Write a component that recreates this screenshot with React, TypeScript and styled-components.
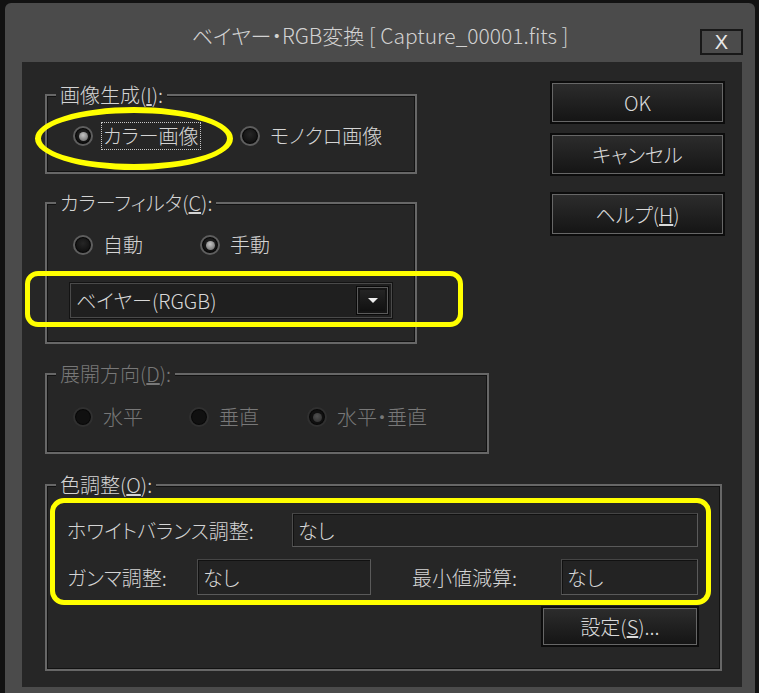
import React from "react";
import styled, { createGlobalStyle } from "styled-components";

const GlobalStyle = createGlobalStyle`
  html, body {
    margin: 0;
    padding: 0;
    background: #121212;
  }
  body {
    width: 759px;
    height: 693px;
    overflow: hidden;
    font-family: "Noto Sans CJK JP", "Noto Sans", sans-serif;
    font-weight: 300;
    font-feature-settings: "palt";
  }
`;

const Window = styled.div`
  margin: 3px 0 0 5px;
  width: 750px;
  height: 690px;
  background: #4b4b4b;
  border-radius: 6px 6px 0 0;
  display: flex;
  flex-direction: column;
`;

const TitleBar = styled.div`
  height: 59px;
  flex: none;
  display: grid;
  grid-template-columns: 1fr auto 1fr;
`;

const Title = styled.div`
  grid-column: 2;
  padding-top: 18px;
  font-size: 21px;
  line-height: 28px;
  color: #d2d2d2;
  white-space: nowrap;
`;

const CloseButton = styled.div`
  grid-column: 3;
  justify-self: end;
  margin: 26px 12px 0 0;
  width: 43px;
  height: 26px;
  box-sizing: border-box;
  border: 2px solid #181818;
  display: flex;
  align-items: center;
  justify-content: center;
  color: #e8e8e8;
  font-family: "Liberation Sans", sans-serif;
  font-size: 20px;
`;

const Client = styled.div`
  position: relative;
  margin: 0 13px 0 17px;
  height: 625px;
  box-sizing: border-box;
  padding: 22px 19px 0 23px;
  background: #262626;
  display: flex;
  flex-direction: column;
`;

const TopSection = styled.div`
  display: flex;
  justify-content: space-between;
`;

const LeftColumn = styled.div`
  display: flex;
  flex-direction: column;
  gap: 18px;
`;

const ButtonColumn = styled.div`
  display: flex;
  flex-direction: column;
  margin-top: -1px;
`;

const Group = styled.fieldset<{ $w: number; $h: number; $pad: number; $top: number }>`
  margin: 0;
  width: ${(p) => p.$w}px;
  height: ${(p) => p.$h}px;
  box-sizing: border-box;
  padding: ${(p) => p.$top}px 0 0 ${(p) => p.$pad}px;
  border: 2px solid #676767;
  box-shadow: inset 0 0 0 1px #121212;
  min-inline-size: 0;

  & > legend {
    margin-left: ${(p) => 9 - p.$pad}px;
    padding: 0 4px;
    font-size: 20px;
    line-height: 22px;
    background: #262626;
  }
`;

const Legend = styled.legend<{ $disabled?: boolean }>`
  color: ${(p) => (p.$disabled ? "#787878" : "#d4d4d4")};
`;

const RadioRow = styled.div<{ $cols: string }>`
  display: grid;
  grid-template-columns: ${(p) => p.$cols};
  align-items: center;
  height: 24px;
`;

const RadioItem = styled.label<{ $disabled?: boolean }>`
  display: flex;
  align-items: center;
  gap: 10px;
  font-size: 20px;
  line-height: 24px;
  color: ${(p) => (p.$disabled ? "#787878" : "#d4d4d4")};
  white-space: nowrap;
`;

const RadioDot = styled.span<{ $checked?: boolean; $disabled?: boolean }>`
  position: relative;
  flex: none;
  width: 20px;
  height: 20px;
  box-sizing: border-box;
  border-radius: 50%;
  border: 2px solid ${(p) => (p.$disabled ? "#303030" : "#5e5e5e")};
  background: ${(p) =>
    p.$disabled ? "#101010" : "radial-gradient(circle at 50% 40%, #262626, #0e0e0e 75%)"};
  box-shadow: inset 0 0 0 1px #080808;

  &::after {
    content: "";
    display: ${(p) => (p.$checked ? "block" : "none")};
    position: absolute;
    left: 50%;
    top: 50%;
    width: 9px;
    height: 9px;
    margin: -4.5px 0 0 -4.5px;
    border-radius: 50%;
    background: ${(p) =>
      p.$disabled
        ? "radial-gradient(circle at 45% 35%, #505050, #2a2a2a)"
        : "radial-gradient(circle at 45% 35%, #c4c4c4, #5e5e5e)"};
  }
`;

const RadioText = styled.span<{ $focus?: boolean }>`
  outline: ${(p) => (p.$focus ? "1px dotted #c8c8c8" : "none")};
  outline-offset: 1px;
`;

const Combo = styled.div`
  margin: 26px 0 0 -3px;
  width: 322px;
  height: 35px;
  box-sizing: border-box;
  padding: 0 3px 0 5px;
  display: flex;
  align-items: center;
  justify-content: space-between;
  background: #1f1f1f;
  border: 1px solid #4a4a4a;
  box-shadow: 0 0 0 1px #131313;
  font-size: 20px;
  color: #d8d8d8;
`;

const ComboButton = styled.span`
  width: 31px;
  height: 27px;
  box-sizing: border-box;
  display: flex;
  align-items: center;
  justify-content: center;
  border: 1px solid #5a5a5a;
  background: linear-gradient(#262626, #0f0f0f);
  box-shadow: 0 0 0 1px #0a0a0a, inset 0 0 0 2px #151515;

  &::after {
    content: "";
    border-left: 5px solid transparent;
    border-right: 5px solid transparent;
    border-top: 5px solid #eeeeee;
  }
`;

const Button = styled.div<{ $w?: number; $h?: number; $mt?: number }>`
  width: ${(p) => p.$w ?? 171}px;
  height: ${(p) => p.$h ?? 39}px;
  margin-top: ${(p) => p.$mt ?? 0}px;
  box-sizing: border-box;
  display: flex;
  align-items: center;
  justify-content: center;
  background: linear-gradient(#2c2c2c, #151515);
  border: 1px solid #676767;
  box-shadow: 0 0 0 2px #0c0c0c;
  color: #dadada;
  font-size: 20px;
`;

const Group3Wrap = styled.div`
  margin-top: 19px;
`;

const Group4Wrap = styled.div`
  margin-top: 20px;
`;

const FieldRow = styled.div<{ $mt?: number }>`
  display: flex;
  align-items: center;
  margin-top: ${(p) => p.$mt ?? 0}px;
`;

const FieldLabel = styled.span<{ $w: number; $ml?: number }>`
  width: ${(p) => p.$w}px;
  margin-left: ${(p) => p.$ml ?? 0}px;
  flex: none;
  font-size: 20px;
  color: #d4d4d4;
  white-space: nowrap;
`;

const TextField = styled.div<{ $w: number; $h?: number }>`
  width: ${(p) => p.$w}px;
  height: ${(p) => p.$h ?? 35}px;
  box-sizing: border-box;
  padding: 0 5px;
  display: flex;
  align-items: center;
  background: #232323;
  border: 1px solid #5a5a5a;
  border-top-color: #454545;
  border-left-color: #4c4c4c;
  box-shadow: inset 1px 1px 0 #111;
  font-size: 20px;
  color: #d8d8d8;
`;

const ButtonRow = styled.div`
  display: flex;
  justify-content: flex-end;
  margin: 13px 23px 0 0;
`;

const Highlight = styled.div<{ $x: number; $y: number; $w: number; $h: number; $r: string; $b: number }>`
  position: absolute;
  left: ${(p) => p.$x}px;
  top: ${(p) => p.$y}px;
  width: ${(p) => p.$w}px;
  height: ${(p) => p.$h}px;
  box-sizing: border-box;
  border: ${(p) => p.$b}px solid #ffff00;
  border-radius: ${(p) => p.$r};
  pointer-events: none;
`;

export default function App() {
  return (
    <>
      <GlobalStyle />
      <Window>
        <TitleBar>
          <Title>ベイヤー・RGB変換 [ Capture_00001.fits ]</Title>
          <CloseButton>X</CloseButton>
        </TitleBar>
        <Client>
          <TopSection>
            <LeftColumn>
              <Group $w={372} $h={90} $pad={26} $top={18}>
                <Legend>
                  画像生成(<u>I</u>):
                </Legend>
                <RadioRow $cols="167px auto">
                  <RadioItem>
                    <RadioDot $checked />
                    <RadioText $focus>カラー画像</RadioText>
                  </RadioItem>
                  <RadioItem>
                    <RadioDot />
                    <RadioText>モノクロ画像</RadioText>
                  </RadioItem>
                </RadioRow>
              </Group>
              <Group $w={372} $h={152} $pad={26} $top={19}>
                <Legend>
                  カラーフィルタ(<u>C</u>):
                </Legend>
                <RadioRow $cols="127px auto">
                  <RadioItem>
                    <RadioDot />
                    <RadioText>自動</RadioText>
                  </RadioItem>
                  <RadioItem>
                    <RadioDot $checked />
                    <RadioText>手動</RadioText>
                  </RadioItem>
                </RadioRow>
                <Combo>
                  <span>ベイヤー(RGGB)</span>
                  <ComboButton />
                </Combo>
              </Group>
            </LeftColumn>
            <ButtonColumn>
              <Button>OK</Button>
              <Button $mt={13}>キャンセル</Button>
              <Button $mt={20} $h={40}>
                ヘルプ(<u>H</u>)
              </Button>
            </ButtonColumn>
          </TopSection>

          <Group3Wrap>
            <Group $w={444} $h={91} $pad={26} $top={20}>
              <Legend $disabled>
                展開方向(<u>D</u>):
              </Legend>
              <RadioRow $cols="116px 118px auto">
                <RadioItem $disabled>
                  <RadioDot $disabled />
                  <RadioText>水平</RadioText>
                </RadioItem>
                <RadioItem $disabled>
                  <RadioDot $disabled />
                  <RadioText>垂直</RadioText>
                </RadioItem>
                <RadioItem $disabled>
                  <RadioDot $disabled $checked />
                  <RadioText>水平・垂直</RadioText>
                </RadioItem>
              </RadioRow>
            </Group>
          </Group3Wrap>

          <Group4Wrap>
            <Group $w={677} $h={197} $pad={20} $top={17}>
              <Legend>
                色調整(<u>O</u>):
              </Legend>
              <FieldRow>
                <FieldLabel $w={225}>ホワイトバランス調整:</FieldLabel>
                <TextField $w={406} $h={34}>なし</TextField>
              </FieldRow>
              <FieldRow $mt={12}>
                <FieldLabel $w={130}>ガンマ調整:</FieldLabel>
                <TextField $w={174} $h={36}>なし</TextField>
                <FieldLabel $w={149} $ml={41}>
                  最小値減算:
                </FieldLabel>
                <TextField $w={137} $h={36}>なし</TextField>
              </FieldRow>
              <ButtonRow>
                <Button $w={154} $h={37}>
                  設定(<u>S</u>)...
                </Button>
              </ButtonRow>
            </Group>
          </Group4Wrap>

          <Highlight $x={13} $y={45} $w={198} $h={63} $r="50%" $b={6} />
          <Highlight $x={3} $y={209} $w={438} $h={56} $r="13px" $b={5} />
          <Highlight $x={28} $y={436} $w={661} $h={107} $r="14px" $b={5} />
        </Client>
      </Window>
    </>
  );
}
